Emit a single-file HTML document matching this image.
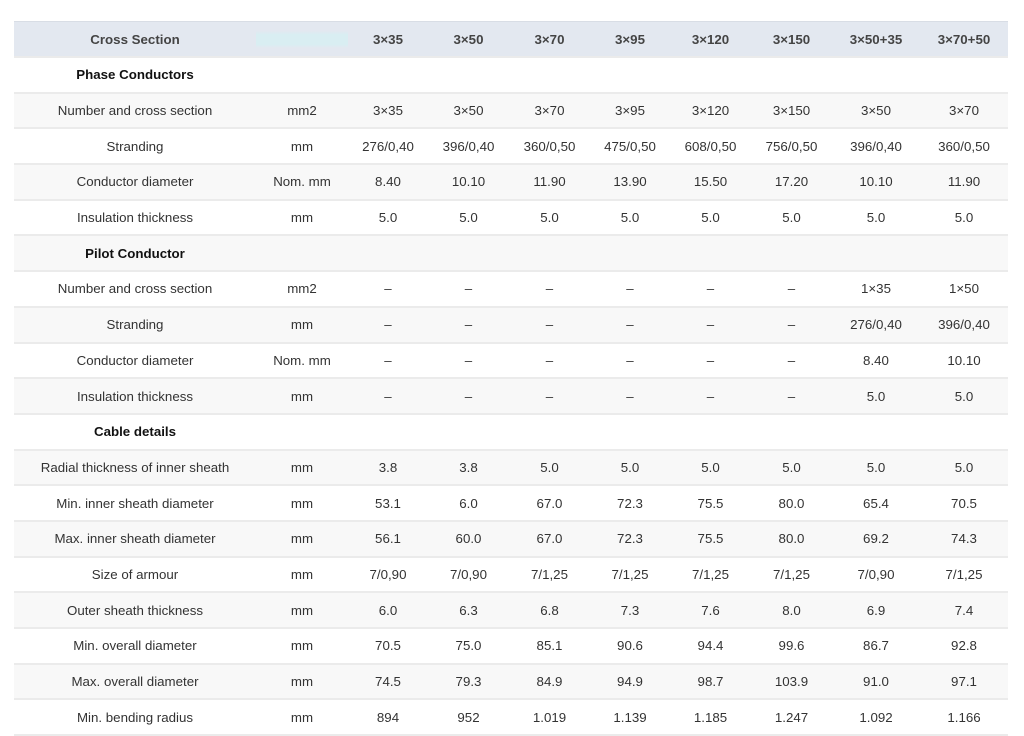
<!DOCTYPE html>
<html><head><meta charset="utf-8"><style>
body{margin:0;background:#fff;font-family:"Liberation Sans","DejaVu Sans",sans-serif;}
table{position:absolute;left:14px;top:21px;width:994px;border-collapse:collapse;table-layout:fixed;font-size:13.3px;color:#333;}
td,th{height:33.7px;padding:0;text-align:center;border-bottom:2px solid #ebebeb;}
th{background:#e3e8f0;color:#444;font-weight:bold;border-top:1px solid #d8dde5;height:34px;}
tbody tr:nth-child(even) td{background:#f8f8f8;}
td.s{font-weight:bold;color:#111;}
</style></head><body>
<table>
<colgroup><col style="width:242px"><col style="width:92px"><col style="width:80px"><col style="width:81px"><col style="width:81px"><col style="width:80px"><col style="width:81px"><col style="width:81px"><col style="width:88px"><col style="width:88px"></colgroup>
<thead><tr><th>Cross Section</th><th style="background:linear-gradient(#e3e8f0 0,#e3e8f0 25%,#d9eef2 35%,#d9eef2 65%,#e3e8f0 75%)"></th><th>3×35</th><th>3×50</th><th>3×70</th><th>3×95</th><th>3×120</th><th>3×150</th><th>3×50+35</th><th>3×70+50</th></tr></thead>
<tbody>
<tr><td class="s">Phase Conductors</td><td></td><td></td><td></td><td></td><td></td><td></td><td></td><td></td><td></td></tr>
<tr><td>Number and cross section</td><td>mm2</td><td>3×35</td><td>3×50</td><td>3×70</td><td>3×95</td><td>3×120</td><td>3×150</td><td>3×50</td><td>3×70</td></tr>
<tr><td>Stranding</td><td>mm</td><td>276/0,40</td><td>396/0,40</td><td>360/0,50</td><td>475/0,50</td><td>608/0,50</td><td>756/0,50</td><td>396/0,40</td><td>360/0,50</td></tr>
<tr><td>Conductor diameter</td><td>Nom. mm</td><td>8.40</td><td>10.10</td><td>11.90</td><td>13.90</td><td>15.50</td><td>17.20</td><td>10.10</td><td>11.90</td></tr>
<tr><td>Insulation thickness</td><td>mm</td><td>5.0</td><td>5.0</td><td>5.0</td><td>5.0</td><td>5.0</td><td>5.0</td><td>5.0</td><td>5.0</td></tr>
<tr><td class="s">Pilot Conductor</td><td></td><td></td><td></td><td></td><td></td><td></td><td></td><td></td><td></td></tr>
<tr><td>Number and cross section</td><td>mm2</td><td>–</td><td>–</td><td>–</td><td>–</td><td>–</td><td>–</td><td>1×35</td><td>1×50</td></tr>
<tr><td>Stranding</td><td>mm</td><td>–</td><td>–</td><td>–</td><td>–</td><td>–</td><td>–</td><td>276/0,40</td><td>396/0,40</td></tr>
<tr><td>Conductor diameter</td><td>Nom. mm</td><td>–</td><td>–</td><td>–</td><td>–</td><td>–</td><td>–</td><td>8.40</td><td>10.10</td></tr>
<tr><td>Insulation thickness</td><td>mm</td><td>–</td><td>–</td><td>–</td><td>–</td><td>–</td><td>–</td><td>5.0</td><td>5.0</td></tr>
<tr><td class="s">Cable details</td><td></td><td></td><td></td><td></td><td></td><td></td><td></td><td></td><td></td></tr>
<tr><td>Radial thickness of inner sheath</td><td>mm</td><td>3.8</td><td>3.8</td><td>5.0</td><td>5.0</td><td>5.0</td><td>5.0</td><td>5.0</td><td>5.0</td></tr>
<tr><td>Min. inner sheath diameter</td><td>mm</td><td>53.1</td><td>6.0</td><td>67.0</td><td>72.3</td><td>75.5</td><td>80.0</td><td>65.4</td><td>70.5</td></tr>
<tr><td>Max. inner sheath diameter</td><td>mm</td><td>56.1</td><td>60.0</td><td>67.0</td><td>72.3</td><td>75.5</td><td>80.0</td><td>69.2</td><td>74.3</td></tr>
<tr><td>Size of armour</td><td>mm</td><td>7/0,90</td><td>7/0,90</td><td>7/1,25</td><td>7/1,25</td><td>7/1,25</td><td>7/1,25</td><td>7/0,90</td><td>7/1,25</td></tr>
<tr><td>Outer sheath thickness</td><td>mm</td><td>6.0</td><td>6.3</td><td>6.8</td><td>7.3</td><td>7.6</td><td>8.0</td><td>6.9</td><td>7.4</td></tr>
<tr><td>Min. overall diameter</td><td>mm</td><td>70.5</td><td>75.0</td><td>85.1</td><td>90.6</td><td>94.4</td><td>99.6</td><td>86.7</td><td>92.8</td></tr>
<tr><td>Max. overall diameter</td><td>mm</td><td>74.5</td><td>79.3</td><td>84.9</td><td>94.9</td><td>98.7</td><td>103.9</td><td>91.0</td><td>97.1</td></tr>
<tr><td>Min. bending radius</td><td>mm</td><td>894</td><td>952</td><td>1.019</td><td>1.139</td><td>1.185</td><td>1.247</td><td>1.092</td><td>1.166</td></tr>
</tbody></table>
</body></html>
